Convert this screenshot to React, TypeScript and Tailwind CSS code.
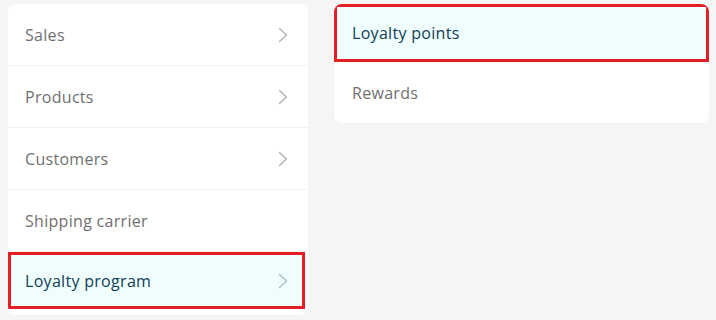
const leftItems = [
  { label: "Sales", chevron: true },
  { label: "Products", chevron: true },
  { label: "Customers", chevron: true },
  { label: "Shipping carrier", chevron: false },
];

function Chevron({ className }: { className: string }) {
  return (
    <svg width="10" height="16" viewBox="0 0 10 16" fill="none" className={className}>
      <path d="M1.5 1.5 L8.5 8 L1.5 14.5" stroke="currentColor" strokeWidth="1.4" strokeLinecap="round" strokeLinejoin="round" />
    </svg>
  );
}

export default function App() {
  return (
    <div className="flex h-[320px] w-[716px] items-start gap-[26px] bg-[#f5f5f5] pl-2 pt-1 font-['Open_Sans',sans-serif] text-[16px] tracking-[0.3px]">
      <div className="w-[300px] overflow-hidden rounded-lg bg-white pb-[6px]">
        {leftItems.map((item) => (
          <div
            key={item.label}
            className="flex h-[62px] items-center justify-between border-b border-[#f0f0f0] pl-[17px] pr-[20px] text-[#707070]"
          >
            <span>{item.label}</span>
            {item.chevron && <Chevron className="text-[#b3b3b3]" />}
          </div>
        ))}
        <div className="mr-[3px] flex h-[57px] items-center justify-between border-[3px] border-[#e41e25] bg-[#effefc] pl-[14px] pr-[14px] text-[#0f3d57]">
          <span>Loyalty program</span>
          <Chevron className="text-[#a6c0cb]" />
        </div>
      </div>
      <div className="w-[375px] overflow-hidden rounded-lg bg-white">
        <div className="flex h-[58px] items-center border-[3px] border-[#e41e25] bg-[#effefc] pl-[15px] text-[#0f3d57]">
          Loyalty points
        </div>
        <div className="flex h-[61px] items-center pl-[18px] text-[#707070]">Rewards</div>
      </div>
    </div>
  );
}
